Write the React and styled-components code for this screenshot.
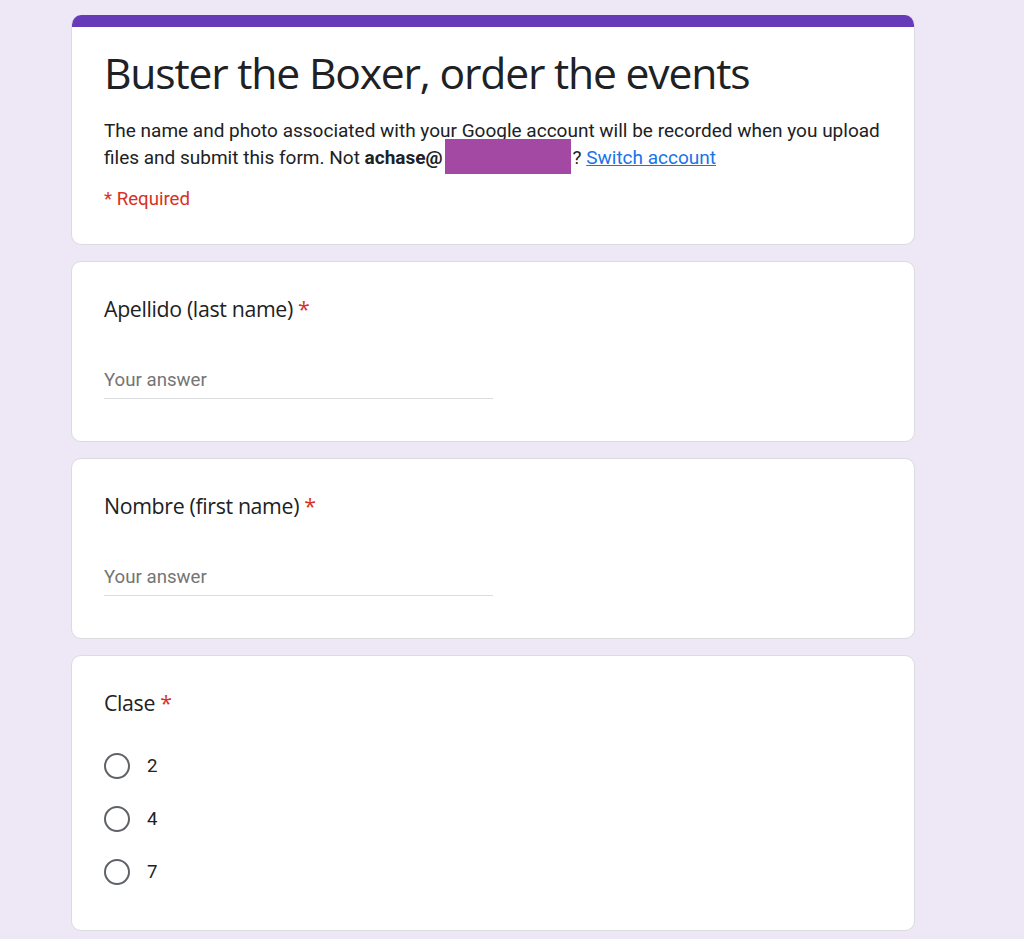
import React from 'react'
import styled, { createGlobalStyle } from 'styled-components'

const GlobalStyle = createGlobalStyle`
  html, body {
    margin: 0;
    padding: 0;
    background: #ede7f6;
  }
  body {
    font-family: Roboto, 'Liberation Sans', sans-serif;
    color: #202124;
  }
`

const questions = [
  { id: 'apellido', label: 'Apellido (last name)', type: 'text' },
  { id: 'nombre', label: 'Nombre (first name)', type: 'text' },
  { id: 'clase', label: 'Clase', type: 'radio', options: ['2', '4', '7'] },
]

const App = () => {
  return (
    <>
      <GlobalStyle />
      <Page>
        <HeaderCard>
          <TopBar />
          <HeaderBody>
            <Title>Buster the Boxer, order the events</Title>
            <Description>
              The name and photo associated with your Google account will be
              recorded when you upload files and submit this form. Not{' '}
              <b>achase@</b>
              <Redacted />? <SwitchLink href="#">Switch account</SwitchLink>
            </Description>
            <RequiredNote>* Required</RequiredNote>
          </HeaderBody>
        </HeaderCard>

        {questions.map(q => (
          <QuestionCard key={q.id}>
            <QuestionTitle>
              {q.label} <Star>*</Star>
            </QuestionTitle>
            {q.type === 'text' ? (
              <AnswerInput placeholder="Your answer" />
            ) : (
              <RadioList>
                {q.options.map(opt => (
                  <RadioRow key={opt}>
                    <RadioCircle />
                    <RadioLabel>{opt}</RadioLabel>
                  </RadioRow>
                ))}
              </RadioList>
            )}
          </QuestionCard>
        ))}
      </Page>
    </>
  )
}

export default App

const Page = styled.div`
  display: flex;
  flex-direction: column;
  gap: 16px;
  width: 844px;
  padding: 15px 0 16px 71px;
`
const Card = styled.div`
  background: #ffffff;
  border: 1px solid #dadce0;
  border-radius: 10px;
`
const HeaderCard = styled(Card)`
  border-top: none;
  overflow: hidden;
`
const TopBar = styled.div`
  height: 12px;
  background: #673ab7;
`
const HeaderBody = styled.div`
  padding: 19px 32px 32px;
`
const Title = styled.div`
  font-family: 'Open Sans', sans-serif;
  font-size: 42.67px;
  line-height: 53.33px;
  letter-spacing: -1.2px;
  color: #202124;
`
const Description = styled.div`
  margin-top: 19px;
  font-size: 19px;
  line-height: 26.67px;
  color: #202124;
  b {
    font-weight: 700;
  }
`
const Redacted = styled.span`
  display: inline-block;
  width: 126px;
  height: 35px;
  margin: -8px 2px -8px 2px;
  vertical-align: -2px;
  background: #a349a4;
`
const SwitchLink = styled.a`
  color: #1a73e8;
  text-decoration: underline;
`
const RequiredNote = styled.div`
  margin-top: 14px;
  font-size: 18.67px;
  line-height: 26.67px;
  color: #d93025;
`
const QuestionCard = styled(Card)`
  padding: 31px 32px 42px;
`
const QuestionTitle = styled.div`
  font-family: 'Open Sans', sans-serif;
  font-size: 21.33px;
  line-height: 32px;
  letter-spacing: -0.35px;
  color: #202124;
`
const Star = styled.span`
  color: #d93025;
`
const AnswerInput = styled.input`
  display: block;
  box-sizing: border-box;
  width: 389px;
  margin-top: 42px;
  padding: 0 0 4px;
  border: none;
  border-bottom: 1px solid #dadce0;
  outline: none;
  font-family: Roboto, sans-serif;
  font-size: 18.67px;
  line-height: 26.67px;
  color: #202124;
  background: transparent;

  ::placeholder {
    color: #70757a;
  }
`
const RadioList = styled.div`
  display: flex;
  flex-direction: column;
  margin-top: 21px;
  margin-bottom: -11px;
`
const RadioRow = styled.div`
  display: flex;
  align-items: center;
  gap: 17px;
  height: 53px;
`
const RadioCircle = styled.span`
  box-sizing: border-box;
  width: 26px;
  height: 26px;
  border: 2px solid #5f6368;
  border-radius: 50%;
`
const RadioLabel = styled.span`
  font-size: 18.67px;
  color: #202124;
`
